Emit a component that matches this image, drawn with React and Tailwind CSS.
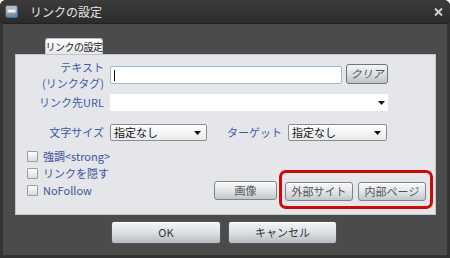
import React from "react";

const font = { fontFamily: '"Noto Sans CJK JP", "Noto Sans", sans-serif' };

const Arrow = () => (
  <svg width="7" height="4" viewBox="0 0 7 4" className="shrink-0">
    <path d="M0 0h7L3.5 4z" fill="#111" />
  </svg>
);

const Select = ({ w }) => (
  <div
    className={`${w} h-[17px] flex items-center justify-between pl-[3px] pr-[5px] border border-[#8c8c8c] rounded-[2px] bg-gradient-to-b from-[#ffffff] to-[#e9eaec] text-[11px] leading-none text-[#111]`}
  >
    <span>指定なし</span>
    <Arrow />
  </div>
);

const Check = ({ label }) => (
  <div className="flex items-center h-[11px]">
    <div className="w-[11px] h-[11px] border border-[#9c9c9c] rounded-[1px] bg-gradient-to-b from-[#ffffff] to-[#d9dbde]" />
    <span className="ml-[5px] text-[11px] leading-none text-[#3a53a0]">{label}</span>
  </div>
);

const Btn = ({ w, children }) => (
  <div
    className={`${w} h-[19px] flex items-center justify-center border border-[#7f848b] rounded-[3px] bg-gradient-to-b from-[#f7f8f9] via-[#e3e5e8] to-[#c3c7cd] text-[11px] leading-none text-[#555] shadow-[inset_0_1px_0_#fff]`}
  >
    {children}
  </div>
);

const BigBtn = ({ w, children }) => (
  <div
    className={`${w} h-[23px] flex items-center justify-center border border-[#555] rounded-[3px] bg-gradient-to-b from-[#f4f5f7] via-[#dde0e4] to-[#b6bbc3] text-[11px] leading-none text-[#333] shadow-[inset_0_1px_0_#fff]`}
  >
    {children}
  </div>
);

export default function App() {
  return (
    <div style={font} className="w-[450px] h-[258px] flex flex-col bg-[#333] rounded-t-[6px] overflow-hidden">
      {/* title bar */}
      <div className="h-[23px] shrink-0 flex items-center bg-gradient-to-b from-[#3c3c3c] to-[#2b2b2b]">
        <svg width="13" height="13" viewBox="0 0 13 13" className="ml-[5px]">
          <defs>
            <linearGradient id="ic" x1="0" y1="0" x2="0" y2="1">
              <stop offset="0" stopColor="#c4c8ce" />
              <stop offset="1" stopColor="#7a8088" />
            </linearGradient>
          </defs>
          <rect x="0.5" y="0.5" width="12" height="12" rx="2" fill="url(#ic)" stroke="#55595f" />
          <rect x="2.5" y="4.5" width="8" height="3" fill="#eef1f4" />
          <path d="M5 12.5 C8 12 11 10 12.5 7 V11 a1.5 1.5 0 0 1 -1.5 1.5z" fill="#3b8fe0" />
        </svg>
        <span className="ml-[12px] text-[12px] leading-none text-[#e6e6e6]">リンクの設定</span>
        <svg width="9" height="8" viewBox="0 0 9 8" className="ml-auto mr-[7px] mt-[1px]">
          <path d="M1 0.5l7 7M8 0.5l-7 7" stroke="#c9d0da" strokeWidth="2" />
        </svg>
      </div>

      {/* body */}
      <div className="flex-1 mx-[3px] mb-[3px] bg-[#4b4b4b] border-t border-[#222] pl-[12px] pt-[14px] flex flex-col">
        {/* tab */}
        <div className="ml-[30px] w-[58px] h-[16px] flex items-center justify-center whitespace-nowrap rounded-t-[3px] border border-b-0 border-[#b9bcc0] bg-gradient-to-b from-[#ffffff] to-[#e4e6e9] text-[10px] tracking-[-0.5px] leading-none text-[#222]">
          リンクの設定
        </div>

        {/* panel */}
        <div className="w-[421px] h-[161px] bg-[#e4e6e9] border border-[#c2c5c9] flex flex-col">
          {/* row 1 */}
          <div className="mt-[4px] h-[32px] flex items-center">
            <div className="w-[88px] text-right text-[11px] leading-[16px] text-[#3d5ba8]">
              <div>テキスト</div>
              <div>(リンクタグ)</div>
            </div>
            <div className="ml-[6px] w-[232px] h-[18px] bg-white border border-[#9fb9d3] rounded-[2px] flex items-center pl-[3px]">
              <div className="w-px h-[11px] bg-[#111]" />
            </div>
            <div className="ml-[4px] -mt-[3px] w-[42px] h-[20px] flex items-center justify-center border border-[#6f7379] rounded-[3px] bg-gradient-to-b from-[#f4f5f6] via-[#dcdfe3] to-[#bfc3c9] text-[11px] leading-none text-[#555] italic">
              クリア
            </div>
          </div>

          {/* row 2 */}
          <div className="mt-[3px] h-[17px] flex items-center">
            <div className="w-[88px] text-right text-[11px] leading-none text-[#3d5ba8]">リンク先URL</div>
            <div className="ml-[6px] w-[278px] h-[17px] bg-white flex items-center justify-end pr-[3px]">
              <Arrow />
            </div>
          </div>

          {/* row 3 */}
          <div className="mt-[13px] h-[17px] flex items-center">
            <div className="w-[88px] text-right text-[11px] leading-none text-[#3d5ba8]">文字サイズ</div>
            <div className="ml-[6px]">
              <Select w="w-[97px]" />
            </div>
            <div className="w-[75px] text-right text-[11px] leading-none text-[#3d5ba8]">ターゲット</div>
            <div className="ml-[6px]">
              <Select w="w-[99px]" />
            </div>
          </div>

          {/* bottom */}
          <div className="flex items-start">
            <div className="ml-[11px] mt-[10px] w-[187px] flex flex-col gap-[6px]">
              <Check label="強調<strong>" />
              <Check label="リンクを隠す" />
              <Check label="NoFollow" />
            </div>
            <div className="mt-[40px]">
              <Btn w="w-[63px]">画像</Btn>
            </div>
            <div className="ml-[2px] mt-[29px] w-[154px] h-[39px] border-[3px] border-[#cc0a0a] rounded-[7px] flex items-start gap-[5px] pl-[3px] pt-[9px]">
              <Btn w="w-[68px]">外部サイト</Btn>
              <Btn w="w-[68px]">内部ページ</Btn>
            </div>
          </div>
        </div>

        {/* dialog buttons */}
        <div className="mt-[6px] ml-[96px] flex gap-[7px]">
          <BigBtn w="w-[110px]">OK</BigBtn>
          <BigBtn w="w-[109px]">キャンセル</BigBtn>
        </div>
      </div>
    </div>
  );
}
